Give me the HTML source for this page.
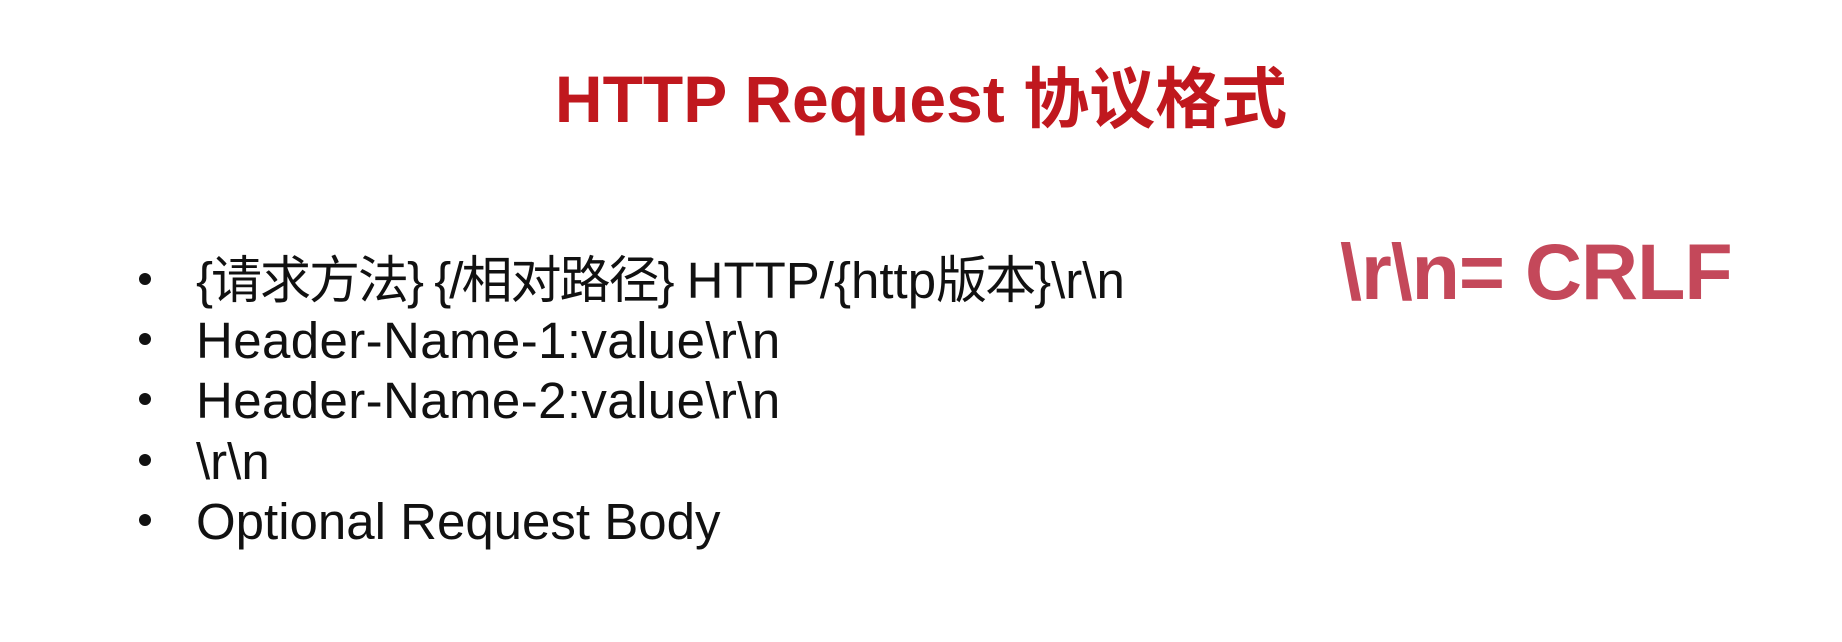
<!DOCTYPE html>
<html><head><meta charset="utf-8"><style>
html,body{margin:0;padding:0;background:#fff;width:1842px;height:642px;overflow:hidden;position:relative}
.t{position:absolute;left:0;width:1842px;top:46px;text-align:center;font:bold 66px "Liberation Sans","Noto Sans CJK SC",sans-serif;color:#c0181e;white-space:nowrap}
.c{position:absolute;left:1340px;top:226px;font:bold 79px "Liberation Sans",sans-serif;color:#c4485a;white-space:nowrap;letter-spacing:-1px}
.l{position:absolute;left:0;font:51px "Liberation Sans","Noto Sans CJK SC",sans-serif;color:#111;white-space:nowrap;line-height:60px}
.b{position:absolute;left:139px;width:12px;height:12px;border-radius:50%;background:#111}
.x{position:absolute;left:196px;}
.cj{letter-spacing:-2px}
</style></head><body>
<div class="t">HTTP Request 协议格式</div>
<div class="c">\r\n= CRLF</div>
<div class="b" style="top:273px"></div><div class="l x" style="top:251px"><span class="cj">{请求方法} {/相对路径}</span> HTTP/{http<span class="cj">版本</span>}\r\n</div>
<div class="b" style="top:333px"></div><div class="l x" style="top:311px;letter-spacing:0.4px">Header-Name-1:value\r\n</div>
<div class="b" style="top:393px"></div><div class="l x" style="top:371px;letter-spacing:0.4px">Header-Name-2:value\r\n</div>
<div class="b" style="top:454px"></div><div class="l x" style="top:432px">\r\n</div>
<div class="b" style="top:514px"></div><div class="l x" style="top:492px">Optional Request Body</div>
</body></html>
